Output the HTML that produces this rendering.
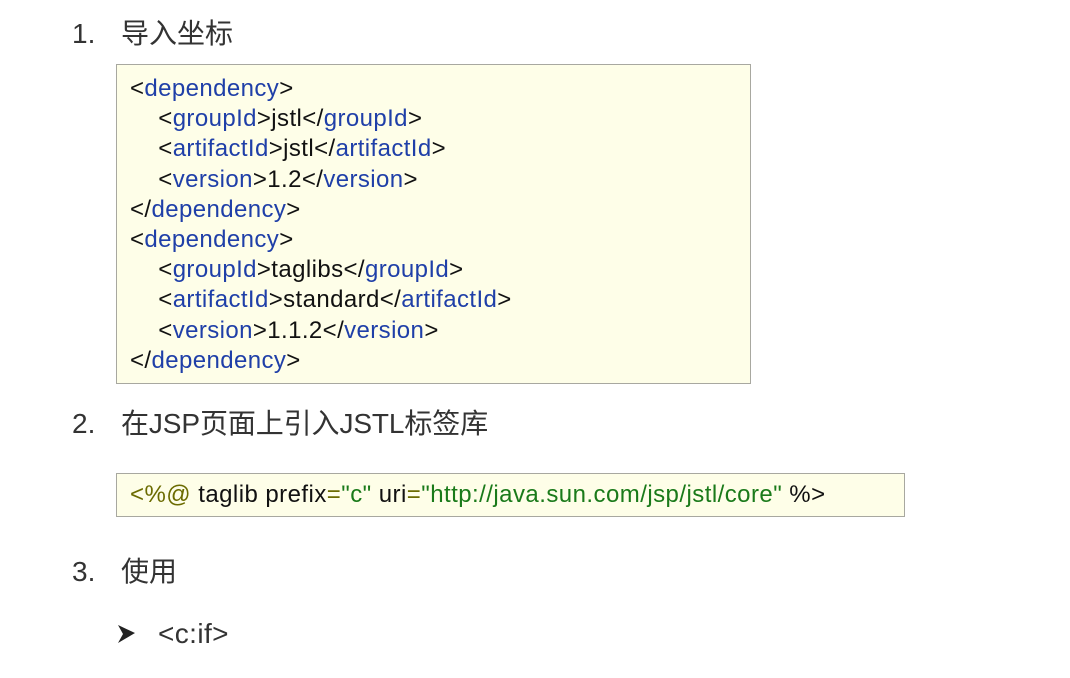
<html><head><style>
body{margin:0;width:1070px;height:678px;background:#fff;position:relative;overflow:hidden;font-family:"Liberation Sans","Noto Sans CJK SC",sans-serif;}
.h{position:absolute;font-size:28px;color:#333;line-height:34px;}
.h .n{position:absolute;left:0;}
.box{position:absolute;background:#fefee8;border:1px solid #a8a8a0;font-size:24px;letter-spacing:0.4px;color:#111;}
.c{position:absolute;white-space:pre;line-height:30.2px;}
b{font-weight:normal;color:#1f3fa8;}
.o{color:#6b6b00}.g{color:#1a7a1a}
</style></head><body>
<div class="h" style="left:72px;top:17px"><span class="n">1.</span><span style="margin-left:49px">导入坐标</span></div>
<div class="box" style="left:116px;top:64px;width:633px;height:318px">
<div class="c" style="left:13px;top:9px">&lt;<b>dependency</b>&gt;
    &lt;<b>groupId</b>&gt;jstl&lt;/<b>groupId</b>&gt;
    &lt;<b>artifactId</b>&gt;jstl&lt;/<b>artifactId</b>&gt;
    &lt;<b>version</b>&gt;1.2&lt;/<b>version</b>&gt;
&lt;/<b>dependency</b>&gt;
&lt;<b>dependency</b>&gt;
    &lt;<b>groupId</b>&gt;taglibs&lt;/<b>groupId</b>&gt;
    &lt;<b>artifactId</b>&gt;standard&lt;/<b>artifactId</b>&gt;
    &lt;<b>version</b>&gt;1.1.2&lt;/<b>version</b>&gt;
&lt;/<b>dependency</b>&gt;</div>
</div>
<div class="h" style="left:72px;top:407px"><span class="n">2.</span><span style="margin-left:49px;letter-spacing:-0.1px">在JSP页面上引入JSTL标签库</span></div>
<div class="box" style="left:116px;top:473px;width:787px;height:42px">
<div class="c" style="left:13px;top:6px;letter-spacing:0.45px"><span class="o">&lt;%@</span> taglib prefix<span class="o">=</span><span class="g">"c"</span> uri<span class="o">=</span><span class="g">"http://java.sun.com/jsp/jstl/core"</span> %&gt;</div>
</div>
<div class="h" style="left:72px;top:555px"><span class="n">3.</span><span style="margin-left:49px">使用</span></div>
<svg style="position:absolute;left:117px;top:624px" width="20" height="20" viewBox="0 0 20 20"><path d="M1 1 L18 9 L1 19 L6 10 Z" fill="#222"/></svg>
<div class="h" style="left:158px;top:617px;font-size:28px;letter-spacing:0.4px">&lt;c:if&gt;</div>
</body></html>
